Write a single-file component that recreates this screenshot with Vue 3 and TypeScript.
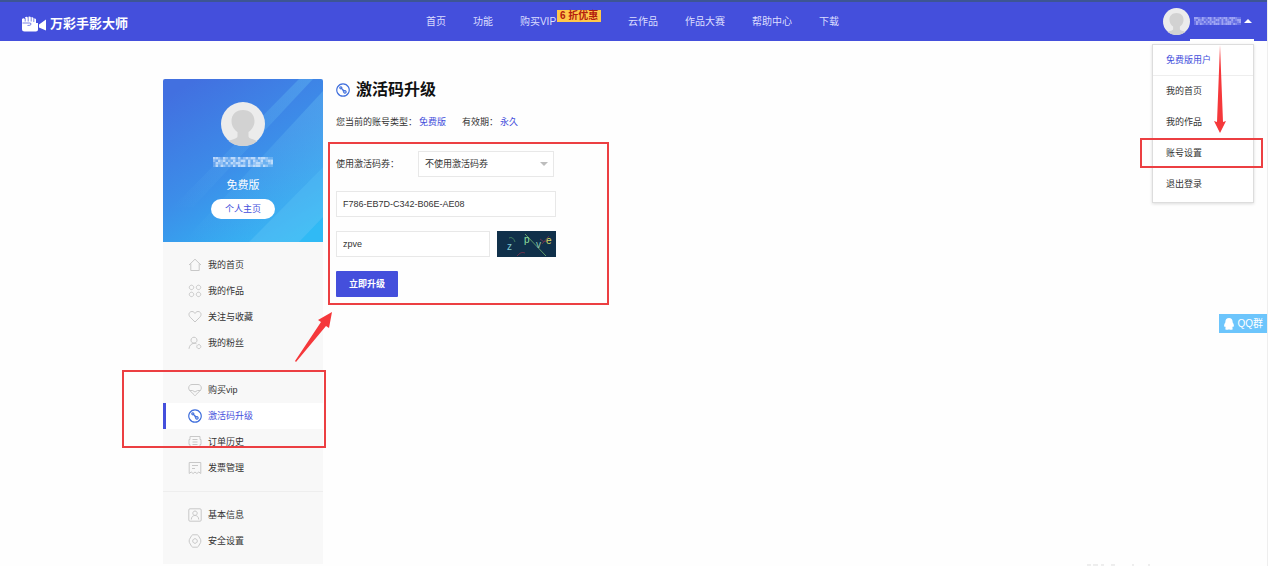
<script setup lang="ts">
import { ref } from 'vue'

interface NavItem { label: string; badge?: string }
interface SideItem { label: string; icon: string; active?: boolean }

const nav: NavItem[] = [
  { label: '首页' },
  { label: '功能' },
  { label: '购买VIP', badge: '6 折优惠' },
  { label: '云作品' },
  { label: '作品大赛' },
  { label: '帮助中心' },
  { label: '下载' },
]

const groups: SideItem[][] = [
  [
    { label: '我的首页', icon: 'home' },
    { label: '我的作品', icon: 'grid' },
    { label: '关注与收藏', icon: 'heart' },
    { label: '我的粉丝', icon: 'fans' },
  ],
  [
    { label: '购买vip', icon: 'gem' },
    { label: '激活码升级', icon: 'key', active: true },
    { label: '订单历史', icon: 'order' },
    { label: '发票管理', icon: 'invoice' },
  ],
  [
    { label: '基本信息', icon: 'profile' },
    { label: '安全设置', icon: 'shield' },
  ],
]

const icons: Record<string, string> = {
  home: 'M1 7 7 1.200 13 7M2.800 5.500v7h8.400v-7',
  grid: 'M3.500 1.200a2.200 2.200 0 1 0 .01 0zM10.500 1.200a2.200 2.200 0 1 0 .01 0zM3.500 8.200a2.200 2.200 0 1 0 .01 0zM10.500 8.200a2.200 2.200 0 1 0 .01 0z',
  heart: 'M7 12 2.200 7.200C-.2 4.700 1.200 1.500 4 1.500c1.600 0 2.500 1 3 2 .5-1 1.400-2 3-2 2.800 0 4.200 3.200 1.800 5.700z',
  fans: 'M6 1.200a3 3 0 1 0 .01 0zM1 12.800c.3-3.200 2-5 5-5.600 1 0 1.800.2 2.500.6M10.800 8.600a2 2 0 1 0 .01 0z',
  gem: 'M4 1.500h6c2 0 3.300 1.500 3.300 3.500C13.300 8 9.500 9.500 7 12.800 4.500 9.500.7 8 .7 5 .7 3 2 1.500 4 1.500zM1.500 7.500h3q2.500 3 5 0h3',
  key: 'M7 .8a6.200 6.200 0 1 0 .01 0zM4.800 3.800a1 1 0 1 0 .01 0zM5.500 5.500 8.200 8M8.900 7.700a1.200 1.200 0 1 0 .01 0zM7 8.200V7',
  order: 'M2 1.500h10v3h1v5h-1v3H2v-3H1v-5h1zM4.500 4.500h5M4.500 7h5M4.500 9.500h5',
  invoice: 'M1.200 1.500h11.600v11l-2-1.500-1.900 1.500L7 11l-1.900 1.500-1.900-1.500-2 1.500zM4 4.500h6M4 7.500h3',
  profile: 'M2 .8h10a1.200 1.200 0 0 1 1.200 1.200v10a1.200 1.200 0 0 1-1.200 1.200H2A1.200 1.200 0 0 1 .8 12V2A1.200 1.200 0 0 1 2 .8zM7 3a2.200 2.200 0 1 0 .01 0zM3.300 11.500c0-5.400 7.400-5.400 7.400 0',
  shield: 'M5 .8h4q.8 0 1.300.7l2.300 4q.5 1.500 0 3l-2.300 4q-.5.700-1.300.7H5q-.8 0-1.300-.7l-2.300-4q-.5-1.500 0-3l2.300-4Q4.200.8 5 .8zM7 4.700a2.300 2.300 0 1 0 .01 0z',
}

const menu: string[] = ['我的首页', '我的作品', '账号设置', '退出登录']

// Masked user names are drawn as rows of tinted cells.
const mask: string[] = [
  '884084088080484880888400',
  '408480408048808084080488',
  '084408084880408048840048',
  '080840408088808488808400',
]

const coupon = ref('none')
const code = ref('F786-EB7D-C342-B06E-AE08')
const captcha = ref('zpve')
</script>

<template>
  <div class="page">
    <header class="top">
      <a class="logo" href="#">
        <svg class="logo-mark" viewBox="0 0 26 16" aria-hidden="true">
          <path d="M1 7V3q1.500-1.500 3 0V1.500Q5.500.2 7 1.500V1q1.700-1.200 3 .2.500-.4 1.500 0t1 1.300q2.500-.5 2.500 1V7h2v6.500q0 2-2 2H3.500Q1 15.500 1 13zM18 8.500 25 3.500v11l-7-3z" fill="#fff" />
          <path d="M4.200 2v3.500M7.200 1v4.500M10.200 1v4.500M12.800 2.500V6M1.500 7h7q2 0 1.500 1.500-.5 1-3.500 1" fill="none" stroke="#444fdc" stroke-width=".7" />
        </svg>
        <span>万彩手影大师</span>
      </a>
      <nav class="nav">
        <a v-for="n in nav" :key="n.label" href="#">{{ n.label }}<span v-if="n.badge" class="badge">{{ n.badge }}</span></a>
      </nav>
      <div class="user">
        <svg class="avatar" viewBox="0 0 44 44" aria-hidden="true">
          <circle cx="22" cy="22" r="22" fill="#ececec" />
          <path d="M22 8c7 0 11.500 4.500 11.500 11 0 5.500-3 9-6 11v4.500c0 2 6 3 9 4.500A22 22 0 0 1 22 44 22 22 0 0 1 7.500 39c3-1.500 9-2.500 9-4.500V30c-3-2-6-5.500-6-11C10.500 12.500 15 8 22 8z" fill="#d2d2d2" />
        </svg>
        <button class="user-btn" type="button" aria-label="账号">
          <svg class="mask small" viewBox="0 0 24 4" preserveAspectRatio="none" aria-hidden="true">
            <template v-for="(row, y) in mask" :key="y">
              <rect v-for="(c, x) in row" :key="x" :x="x" :y="y" width="1" height="1" fill="#cfd2ff" :opacity="0.25 + Number(c) / 20" />
            </template>
          </svg>
          <svg class="caret" viewBox="0 0 8 4" aria-hidden="true"><path d="M4 0 8 4H0z" fill="#fff" /></svg>
        </button>
        <div class="menu">
          <a class="plan" href="#">免费版用户</a>
          <a v-for="m in menu" :key="m" href="#" :class="{ marked: m === '账号设置' }">{{ m }}</a>
          <svg class="arrow-down" viewBox="0 0 12 88" aria-hidden="true"><path d="M6 0 9 77l3-1-6 12-6-12 3 1z" fill="#f5383b" /></svg>
        </div>
      </div>
    </header>

    <div class="body">
      <aside class="side">
        <section class="card">
          <svg class="card-bg" viewBox="0 0 160 163" preserveAspectRatio="none" aria-hidden="true">
            <defs>
              <linearGradient id="sky" x1="0.2" y1="0" x2="0.8" y2="1">
                <stop offset="0" stop-color="#4270e0" />
                <stop offset=".5" stop-color="#3c8ee9" />
                <stop offset="1" stop-color="#30baf5" />
              </linearGradient>
              <linearGradient id="beam" x1="1" y1="0" x2="0" y2="1">
                <stop offset="0" stop-color="#5fb5f0" stop-opacity=".45" />
                <stop offset="1" stop-color="#5fb5f0" stop-opacity="0" />
              </linearGradient>
            </defs>
            <rect width="160" height="163" fill="url(#sky)" />
            <path d="M136 0h14L30 128H10z" fill="url(#beam)" />
            <path d="M160 12v76L86 163H20z" fill="url(#beam)" />
            <path d="M160 88v50l-24 25H86z" fill="#69c6f5" opacity=".4" />
          </svg>
          <svg class="avatar" viewBox="0 0 44 44" aria-hidden="true">
            <circle cx="22" cy="22" r="22" fill="#ececec" />
            <path d="M22 8c7 0 11.500 4.500 11.500 11 0 5.500-3 9-6 11v4.500c0 2 6 3 9 4.500A22 22 0 0 1 22 44 22 22 0 0 1 7.500 39c3-1.500 9-2.500 9-4.500V30c-3-2-6-5.500-6-11C10.500 12.500 15 8 22 8z" fill="#d2d2d2" />
          </svg>
          <svg class="mask" viewBox="0 0 24 4" preserveAspectRatio="none" aria-hidden="true">
            <template v-for="(row, y) in mask" :key="y">
              <rect v-for="(c, x) in row" :key="x" :x="x" :y="y" width="1" height="1" fill="#e4f0ff" :opacity="0.25 + Number(c) / 16" />
            </template>
          </svg>
          <span class="level">免费版</span>
          <a class="pill" href="#">个人主页</a>
        </section>
        <nav v-for="(g, i) in groups" :key="i" class="group">
          <a v-for="s in g" :key="s.label" href="#" :class="{ active: s.active }">
            <svg viewBox="0 0 14 14" aria-hidden="true"><path :d="icons[s.icon]" /></svg>
            <span>{{ s.label }}</span>
          </a>
          <span v-if="i === 1" class="mark side-mark"></span>
        </nav>
      </aside>

      <main class="main">
        <h1>
          <svg viewBox="0 0 14 14" aria-hidden="true"><path :d="icons.key" /></svg>
          <span>激活码升级</span>
        </h1>
        <p class="status">
          <span>您当前的账号类型：<b>免费版</b></span>
          <span>有效期：<b>永久</b></span>
        </p>
        <form class="form" @submit.prevent>
          <div class="row">
            <label for="coupon">使用激活码券：</label>
            <div class="select">
              <select id="coupon" v-model="coupon">
                <option value="none">不使用激活码券</option>
              </select>
              <svg viewBox="0 0 8 4" aria-hidden="true"><path d="M0 0h8L4 4z" fill="#bdbdbd" /></svg>
            </div>
          </div>
          <input v-model="code" class="field" type="text" aria-label="激活码" />
          <div class="row captcha">
            <input v-model="captcha" class="field" type="text" aria-label="验证码" />
            <svg class="captcha-img" viewBox="0 0 59 26" role="img" aria-label="验证码图片">
              <rect width="59" height="26" fill="#10304a" />
              <path d="M28 3 49 25" stroke="#5f9a68" fill="none" />
              <path d="M12 7q4-2 6 4" stroke="#3f7d60" fill="none" />
              <path d="M43 8q3 4 8 2M52 5l-7 8M20 25q4-5 8-3" stroke="#68304c" fill="none" />
              <text x="10" y="19" fill="#7fc8d0">z</text>
              <text x="27" y="12" fill="#8fe0a0">p</text>
              <text x="39" y="17" fill="#8cc8b0">v</text>
              <text x="49" y="13" fill="#d0d860">e</text>
            </svg>
          </div>
          <button class="submit" type="submit">立即升级</button>
          <span class="mark form-mark"></span>
          <svg class="arrow-up" viewBox="0 0 37 50" aria-hidden="true"><path d="M0 49 26 10l-3-2L37 0 34 16l-3-2L1 50z" fill="#f5383b" /></svg>
        </form>
      </main>
    </div>

    <a class="qq" href="#">
      <svg viewBox="0 0 10 12" aria-hidden="true"><path d="M5 0c2.500 0 3.800 2 3.600 4.200C9.800 6 10.200 7.500 9.700 8.800L8.800 8.500q0 .8-.6 1.500 1 .6.300 1.500Q6.500 12.200 5 11.300q-1.500.9-3.500.2-.7-.9.300-1.500-.6-.7-.6-1.500l-.9.3C-.2 7.500.2 6 1.400 4.200 1.200 2 2.500 0 5 0z" fill="#fff" /></svg>
      <span>QQ群</span>
    </a>
    <svg class="traces" viewBox="0 0 64 2" aria-hidden="true"><path d="M0 1h4M6 1h5M14 1h3M24 1h4M45 1h2M61 1h2" stroke="#ddd" /></svg>
  </div>
</template>

<style>
html, body { margin: 0; background: #fefefe; }
</style>

<style scoped>
.page {
  position: relative;
  box-sizing: border-box;
  min-height: 100vh;
  border-right: 1px solid #eee;
  overflow: hidden;
  color: #333;
  font: 9px/16px "Liberation Sans", "Noto Sans CJK SC", sans-serif;
}
a { color: inherit; text-decoration: none; }
button, input, select { font: inherit; color: inherit; }
.top {
  display: grid;
  grid-template-columns: 1fr auto 1fr;
  align-items: center;
  box-sizing: border-box;
  height: 41px;
  border-top: 2px solid #3d5594;
  background: #444fdc;
  color: #dcdeff;
}
.logo {
  display: flex;
  align-items: center;
  gap: 3px;
  margin: 4px 0 0 21px;
  color: #fff;
  font-size: 13px;
  font-weight: 700;
}
.logo-mark { width: 26px; height: 16px; }
.nav { display: flex; gap: 27px; padding-right: 2px; font-size: 10px; }
.nav a { display: flex; }
.badge {
  box-sizing: border-box;
  width: 44px;
  height: 12px;
  margin: -4px 0 0 1px;
  background: #ffc84a;
  color: #b3200f;
  font-weight: 700;
  line-height: 12px;
  text-align: center;
  white-space: nowrap;
}
.user {
  position: relative;
  display: flex;
  justify-content: flex-end;
  align-items: stretch;
  height: 39px;
  padding-right: 13px;
}
.user .avatar { width: 27px; height: 27px; margin-top: 6px; }
.user-btn {
  display: flex;
  align-items: center;
  gap: 3px;
  padding: 0 2px 0 4px;
  border: 0;
  border-bottom: 2px solid #fff;
  background: none;
}
.mask { width: 60px; height: 10px; }
.mask.small { width: 47px; height: 8px; }
.caret { width: 8px; height: 4px; }
.menu {
  position: absolute;
  z-index: 2;
  top: 42px;
  right: 13px;
  box-sizing: border-box;
  width: 102px;
  padding-bottom: 2px;
  border: 1px solid #ddd;
  background: #fff;
  box-shadow: 0 1px 3px #0002;
  color: #333;
}
.menu a { position: relative; display: block; padding-left: 13px; line-height: 31px; }
.menu .plan { line-height: 30px; border-bottom: 1px solid #eee; color: #444fdc; }
.mark, .marked::after {
  position: absolute;
  box-sizing: border-box;
  border: 2px solid #ec3f42;
  content: "";
  pointer-events: none;
}
.marked::after { inset: 0 -10px 1px -13px; }
.arrow-down { position: absolute; top: 0; right: 27px; width: 12px; height: 88px; }
.body {
  display: flex;
  align-items: flex-start;
  gap: 13px;
  max-width: 941px;
  margin: 38px auto 0;
}
.side { flex: 0 0 160px; background: #f8f8f8; }
.card {
  position: relative;
  display: flex;
  flex-direction: column;
  align-items: center;
  padding: 23px 0;
  border-radius: 2px 2px 0 0;
  overflow: hidden;
  color: #fff;
}
.card > * { position: relative; }
.card .card-bg { position: absolute; inset: 0; width: 100%; height: 100%; }
.card .avatar { width: 44px; height: 44px; }
.card .mask { margin-top: 11px; }
.level { margin-top: 10px; font-size: 11px; }
.pill {
  width: 64px;
  margin-top: 6px;
  border-radius: 10px;
  background: #fff;
  color: #444fdc;
  line-height: 20px;
  text-align: center;
}
.group { position: relative; padding: 10px 0; }
.group + .group { border-top: 1px solid #f8f8f8; }
.group + .group:last-child { border-color: #eee; }
.group a {
  display: flex;
  align-items: center;
  gap: 6px;
  height: 26px;
  padding-left: 22px;
  border-left: 3px solid transparent;
}
.group svg { width: 14px; height: 14px; }
.group path { fill: none; stroke: #c8c8c8; }
.group .active { border-color: #444fdc; background: #fff; color: #444fdc; }
.group .active path, h1 path { fill: none; stroke: #4170dd; stroke-width: 1.2; }
.side-mark { top: 3px; right: -3px; left: -41px; height: 78px; }
.main { flex: 1; }
h1 {
  display: flex;
  align-items: center;
  gap: 6px;
  margin: 0;
  color: #111;
  font-size: 16px;
  font-weight: 700;
  line-height: 22px;
}
h1 svg { width: 14px; height: 14px; }
.status { display: flex; gap: 16px; margin: 13px 0 21px; }
.status b { padding-left: 2px; color: #444fdc; font-weight: 400; }
.form {
  position: relative;
  display: flex;
  flex-direction: column;
  align-items: flex-start;
  gap: 14px;
  width: 220px;
}
.row { display: flex; align-items: center; width: 100%; }
.row label { flex: 0 0 82px; }
.select { position: relative; width: 136px; }
.select select, .field {
  box-sizing: border-box;
  display: block;
  width: 100%;
  height: 26px;
  padding: 0 6px;
  border: 1px solid #e8e8e8;
  border-radius: 0;
  background: #fff;
  appearance: none;
}
.select svg { position: absolute; top: 11px; right: 6px; width: 8px; height: 4px; pointer-events: none; }
.captcha { gap: 7px; }
.captcha .field { flex: 1; width: auto; min-width: 0; }
.captcha-img { flex: 0 0 59px; height: 26px; font-size: 10px; }
.submit {
  width: 62px;
  height: 26px;
  padding: 0;
  border: 0;
  border-radius: 1px;
  background: #444fdc;
  color: #fff;
  font-weight: 700;
}
.form-mark { top: -9px; right: -53px; bottom: -8px; left: -8px; }
.arrow-up { position: absolute; top: 161px; left: -41px; width: 37px; height: 50px; }
.qq {
  position: absolute;
  top: 314px;
  right: 0;
  display: flex;
  align-items: center;
  gap: 3px;
  padding: 0 4px 0 5px;
  background: #6cc5fc;
  color: #fff;
  font-size: 10px;
  line-height: 19px;
}
.qq svg { width: 10px; height: 12px; }
.traces {
  position: absolute;
  right: 116px;
  bottom: 0;
  width: 64px;
  height: 2px;
}
</style>
